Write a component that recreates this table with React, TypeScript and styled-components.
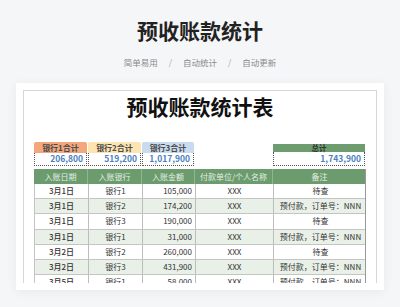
import styled, { createGlobalStyle } from 'styled-components';

const GlobalStyle = createGlobalStyle`
	html, body {
		margin: 0;
		padding: 0;
		background: #f5f6f8;
		font-family: "Noto Sans CJK SC", "Noto Sans", sans-serif;
		overflow: hidden;
	}
`;

interface IRow {
	date: string;
	bank: string;
	amount: string;
	payer: string;
	note: string;
}

const rows: IRow[] = [
	{ date: '3月1日', bank: '银行1', amount: '105,000', payer: 'XXX', note: '待查' },
	{ date: '3月1日', bank: '银行2', amount: '174,200', payer: 'XXX', note: '预付款，订单号：NNN' },
	{ date: '3月1日', bank: '银行3', amount: '190,000', payer: 'XXX', note: '待查' },
	{ date: '3月1日', bank: '银行1', amount: '31,000', payer: 'XXX', note: '预付款，订单号：NNN' },
	{ date: '3月2日', bank: '银行2', amount: '260,000', payer: 'XXX', note: '待查' },
	{ date: '3月2日', bank: '银行3', amount: '431,900', payer: 'XXX', note: '预付款，订单号：NNN' },
	{ date: '3月5日', bank: '银行1', amount: '58,000', payer: 'XXX', note: '预付款，订单号：NNN' },
];

const banks = [
	{ label: '银行1合计', value: '206,800', color: '#f4a77c' },
	{ label: '银行2合计', value: '519,200', color: '#fde4b0' },
	{ label: '银行3合计', value: '1,017,900', color: '#c8dbef' },
];

const COLS = '54px 54px 53px 78px 93px';

const App = () => {
	return (
		<Page>
			<GlobalStyle />
			<Title>预收账款统计</Title>
			<Tags>
				<span>简单易用</span>
				<Slash>/</Slash>
				<span>自动统计</span>
				<Slash>/</Slash>
				<span>自动更新</span>
			</Tags>
			<Card>
				<Sheet>
					<SheetTitle>预收账款统计表</SheetTitle>
					<Summary>
						{banks.map((b) => (
							<SumBox key={b.label}>
								<BankHead $bg={b.color}>{b.label}</BankHead>
								<SumValue $h={13}>{b.value}</SumValue>
							</SumBox>
						))}
						<div />
						<SumBox>
							<TotalHead>总计</TotalHead>
							<SumValue $h={14}>1,743,900</SumValue>
						</SumBox>
					</Summary>
					<Table>
						<HeadRow>
							<HeadCell>入账日期</HeadCell>
							<HeadCell>入账银行</HeadCell>
							<HeadCell>入账金额</HeadCell>
							<HeadCell>付款单位/个人名称</HeadCell>
							<HeadCell>备注</HeadCell>
						</HeadRow>
						{rows.map((r, i) => (
							<Row key={i} $alt={i % 2 === 1}>
								<Cell $bold>{r.date}</Cell>
								<Cell>{r.bank}</Cell>
								<Cell $right>{r.amount}</Cell>
								<Cell>{r.payer}</Cell>
								<Cell>{r.note}</Cell>
							</Row>
						))}
					</Table>
				</Sheet>
			</Card>
		</Page>
	);
};

const Page = styled.main`
	display: flex;
	flex-direction: column;
	align-items: center;
	padding-top: 15px;
	height: 307px;
	box-sizing: border-box;
`;

const Title = styled.h1`
	margin: 0;
	font-size: 21px;
	line-height: 30px;
	font-weight: 700;
	color: #222;
`;

const Tags = styled.div`
	margin-top: 10px;
	display: flex;
	gap: 11px;
	font-size: 8.5px;
	line-height: 14px;
	color: #8a8a8a;
`;

const Slash = styled.span`
	color: #aaa;
`;

const Card = styled.section`
	margin-top: 14px;
	width: 368px;
	height: 207px;
	box-sizing: border-box;
	padding: 7px;
	background: #fff;
	box-shadow: 0 2px 10px rgba(0, 0, 0, 0.06);
`;

const Sheet = styled.div`
	height: 193px;
	box-sizing: border-box;
	border: 1px solid #d6d6d6;
	border-bottom: none;
	padding: 0 10px;
	overflow: hidden;
	display: flex;
	flex-direction: column;
`;

const SheetTitle = styled.h2`
	margin: 0;
	text-align: center;
	font-size: 21px;
	line-height: 30px;
	font-weight: 700;
	color: #111;
`;

const Summary = styled.div`
	margin-top: 21px;
	display: grid;
	grid-template-columns: ${COLS};
	align-items: end;
`;

const SumBox = styled.div`
	display: flex;
	flex-direction: column;
	margin-right: 1px;
`;

const BankHead = styled.div<{ $bg: string }>`
	height: 11px;
	line-height: 11px;
	background: ${(p) => p.$bg};
	border-radius: 2px 2px 0 0;
	font-size: 8px;
	font-weight: 700;
	color: #4a4a4a;
	text-align: center;
`;

const TotalHead = styled.div`
	height: 8px;
	line-height: 8px;
	background: #6d9c6f;
	font-size: 7.5px;
	font-weight: 700;
	color: #333;
	text-align: center;
`;

const SumValue = styled.div<{ $h: number }>`
	height: ${(p) => p.$h}px;
	line-height: ${(p) => p.$h - 2}px;
	box-sizing: border-box;
	border: 1px dotted #555;
	border-top: none;
	padding-right: 3px;
	text-align: right;
	font-size: 8.5px;
	font-weight: 700;
	color: #4b7fc0;
`;

const Table = styled.div`
	margin-top: 3px;
	display: flex;
	flex-direction: column;
	border-right: 1px solid #999;
`;

const HeadRow = styled.div`
	display: grid;
	grid-template-columns: ${COLS};
	height: 15px;
	background: #6c9c6e;
`;

const HeadCell = styled.div`
	font-size: 8px;
	line-height: 15px;
	color: #e4eee4;
	text-align: center;
	border-right: 1px solid #8fb591;
	white-space: nowrap;
	&:last-child {
		border-right: none;
	}
`;

const Row = styled.div<{ $alt: boolean }>`
	display: grid;
	grid-template-columns: ${COLS};
	height: 15.2px;
	box-sizing: border-box;
	border-bottom: 1px solid #c4c4c4;
	border-left: 1px solid #c4c4c4;
	background: ${(p) => (p.$alt ? '#e8f0e8' : '#fff')};
`;

const Cell = styled.div<{ $bold?: boolean; $right?: boolean }>`
	font-size: 8px;
	line-height: 14px;
	color: #333;
	font-weight: ${(p) => (p.$bold ? 500 : 400)};
	text-align: ${(p) => (p.$right ? 'right' : 'center')};
	padding-right: ${(p) => (p.$right ? '3px' : '0')};
	border-right: 1px solid #bdbdbd;
	white-space: nowrap;
	&:last-child {
		border-right: none;
	}
`;

export default App;
